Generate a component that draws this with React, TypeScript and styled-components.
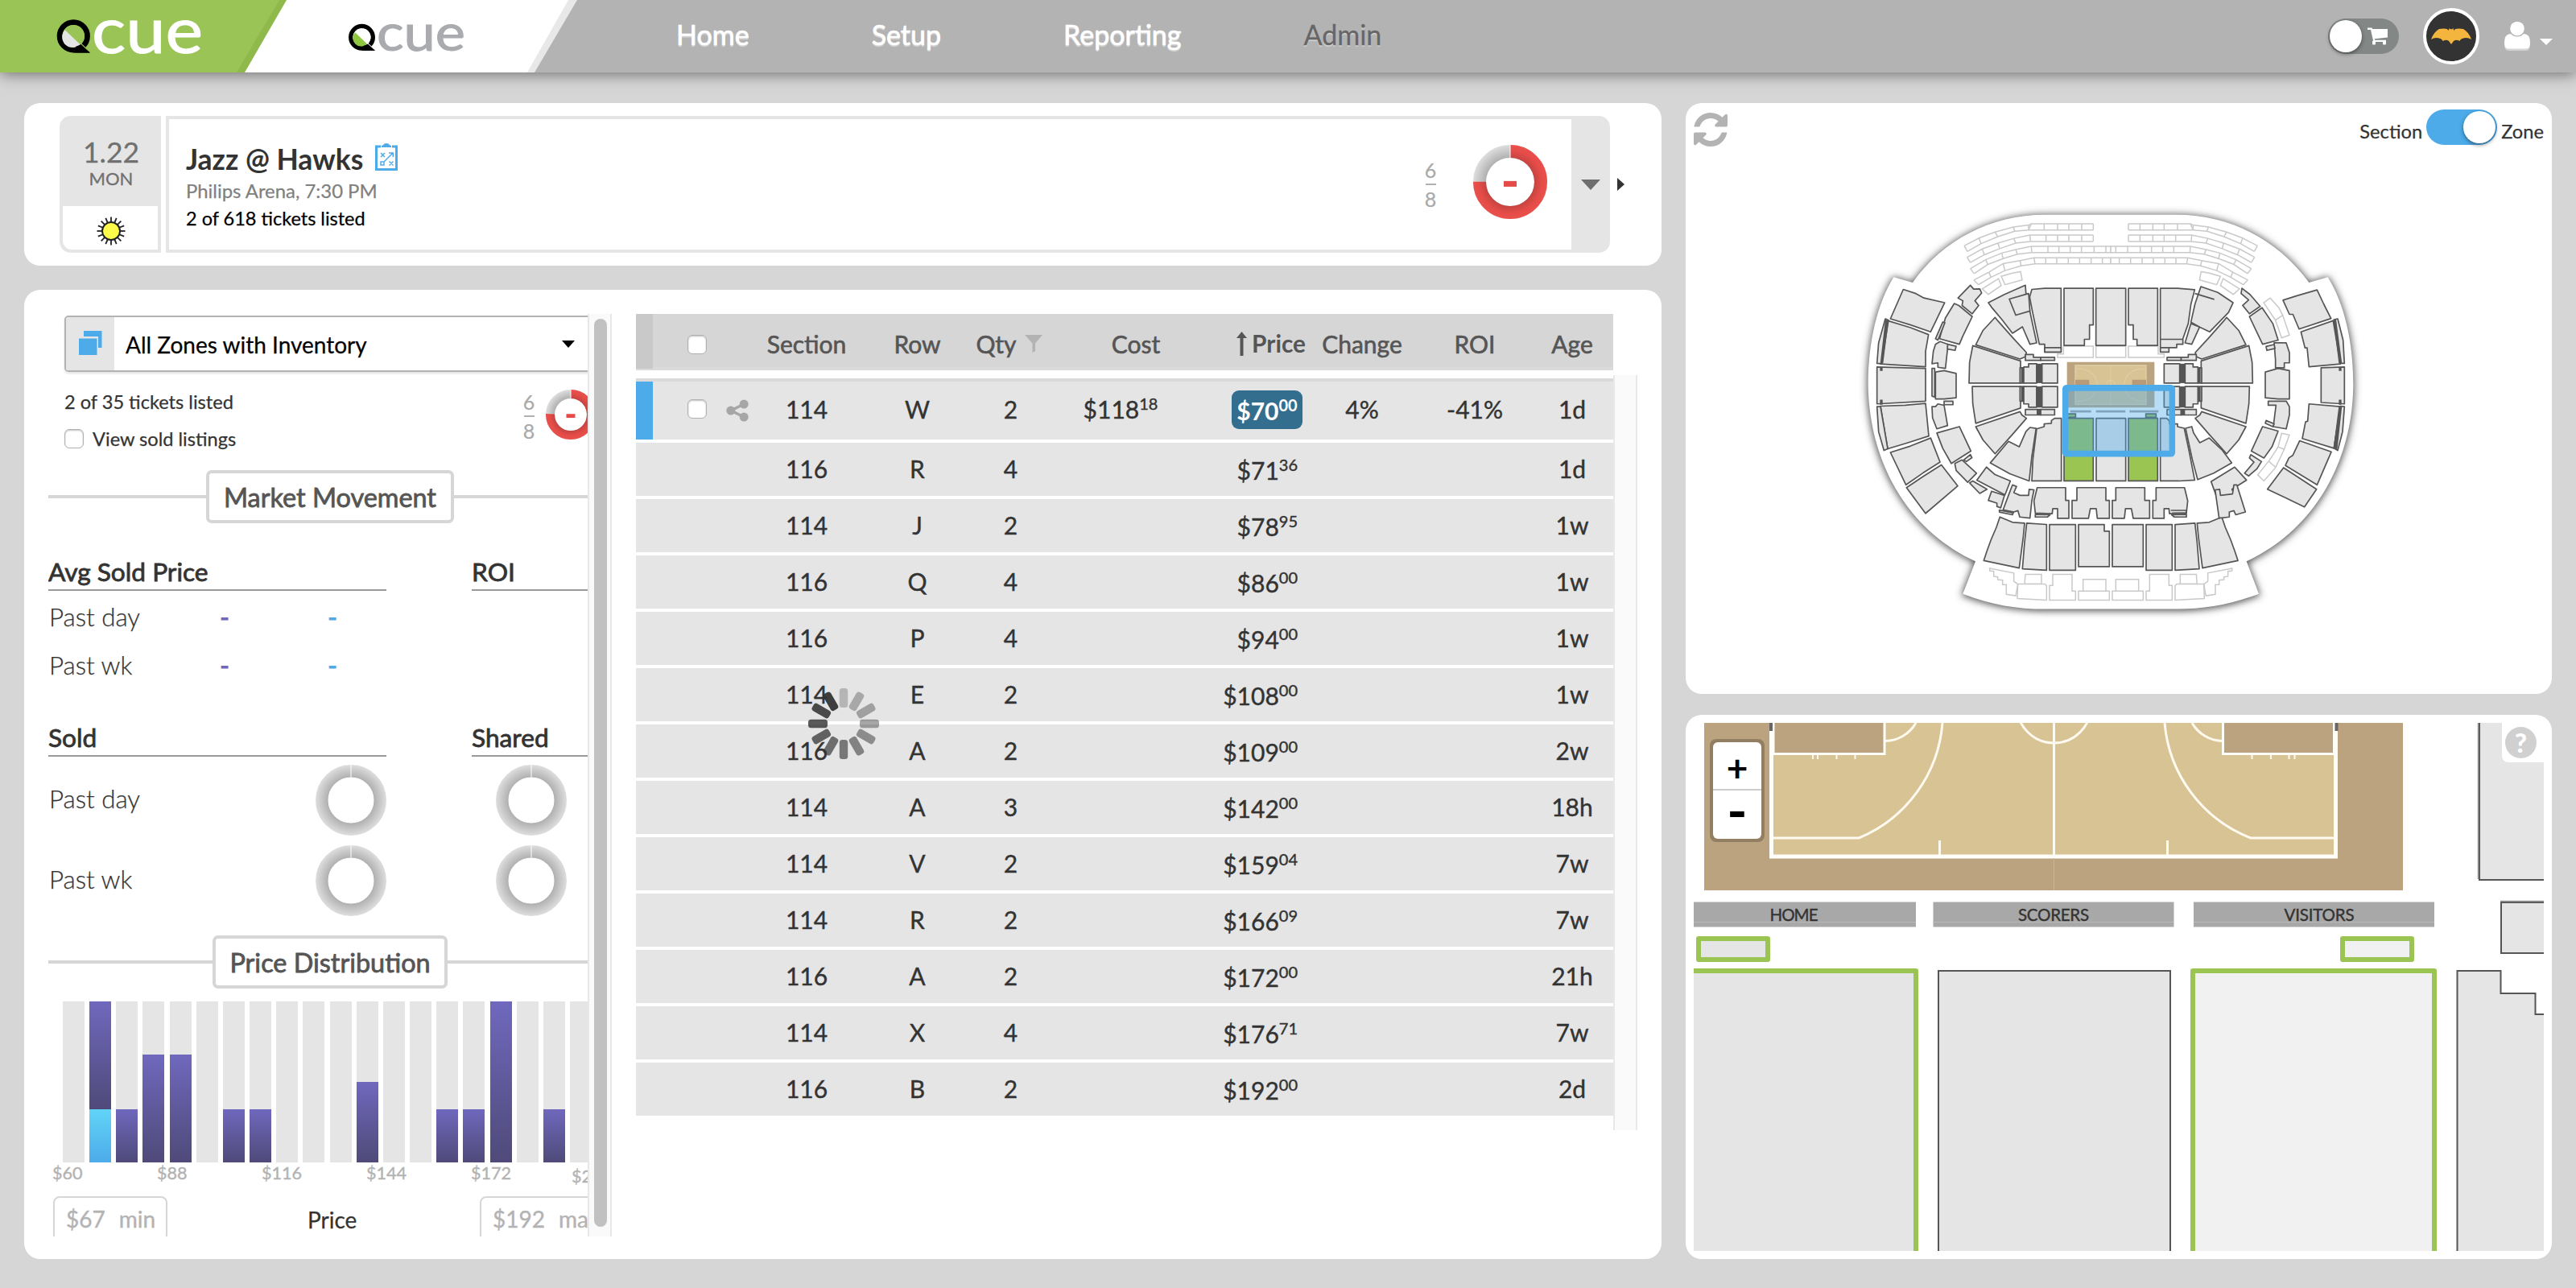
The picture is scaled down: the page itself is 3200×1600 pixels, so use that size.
import React from "react";
import styled, { createGlobalStyle, css } from "styled-components";

const blue = "#4dabe9";
const green = "#9bc552";

const GlobalStyle = createGlobalStyle`
  * { box-sizing: border-box; }
  body {
    margin: 0;
    background: #d6d6d6;
    font-family: Lato, "Open Sans", sans-serif;
    color: #333;
  }
  svg { display: block; flex: none; }
`;

/* ---------- page frame ---------- */

const Page = styled.div`
  width: 3200px;
  height: 1600px;
  overflow: hidden;
  background: #d6d6d6;
  display: flex;
  flex-direction: column;
`;

const TopBar = styled.header`
  height: 90px;
  flex: none;
  background: #b3b3b3;
  box-shadow: 0 2px 18px rgba(0, 0, 0, 0.5);
  display: flex;
  align-items: center;
  padding-right: 29px;
`;

const Nav = styled.nav`
  display: flex;
  gap: 152px;
  margin-left: 123px;
  flex: 1;
`;

const NavItem = styled.a<{ $muted?: boolean }>`
  font-size: 34px;
  line-height: 42px;
  margin-top: -5px;
  color: ${(p) => (p.$muted ? "#666" : "#fff")};
  -webkit-text-stroke: ${(p) => (p.$muted ? 0.3 : 0.7)}px currentColor;
  text-shadow: 0 2px 1px ${(p) => (p.$muted ? "rgba(255,255,255,.4)" : "rgba(255,255,255,.45)")};
`;

const Tools = styled.div`
  display: flex;
  align-items: center;
`;

const Spacer = styled.span<{ $w: number }>`
  width: ${(p) => p.$w}px;
  flex: none;
`;

const Switch = styled.div<{ $on?: boolean }>`
  width: 88px;
  height: 44px;
  border-radius: 22px;
  padding: 2px;
  display: flex;
  align-items: center;
  gap: 7px;
  justify-content: ${(p) => (p.$on ? "flex-end" : "flex-start")};
  background: ${(p) => (p.$on ? blue : "#838887")};
`;

const Knob = styled.span`
  width: 40px;
  height: 40px;
  border-radius: 50%;
  background: #fff;
  box-shadow: 0 2px 5px rgba(0, 0, 0, 0.45);
`;

const Avatar = styled.div`
  width: 70px;
  height: 70px;
  border-radius: 50%;
  border: 4px solid #fff;
  background: #333;
  display: flex;
  align-items: center;
  justify-content: center;
  margin: 0 31px 0 30px;
`;

const Columns = styled.main`
  flex: 1;
  display: grid;
  grid-template-columns: 2034px 1076px;
  gap: 30px;
  padding: 38px 30px 36px;
`;

const Column = styled.div<{ $gap: number }>`
  display: flex;
  flex-direction: column;
  gap: ${(p) => p.$gap}px;
`;

const Card = styled.section`
  background: #fff;
  border-radius: 20px;
  position: relative;
`;

/* ---------- event summary ---------- */

const EventCard = styled(Card)`
  height: 202px;
  padding: 16px 44px;
  display: flex;
  align-items: center;
`;

const DateTile = styled.div`
  width: 126px;
  height: 170px;
  background: #e5e5e5;
  border-radius: 14px 0 0 14px;
  padding: 0 4px 4px;
  display: flex;
  flex-direction: column;
  margin-right: 6px;
`;

const DateText = styled.div`
  height: 112px;
  padding: 24px 0 0 2px;
  display: flex;
  flex-direction: column;
  align-items: center;
  color: #707070;
`;

const Day = styled.span`
  font-size: 35.5px;
  line-height: 42px;
  -webkit-text-stroke: 0.3px currentColor;
`;

const Weekday = styled.span`
  font-size: 22px;
  line-height: 24px;
  -webkit-text-stroke: 0.3px currentColor;
`;

const Weather = styled.div`
  flex: 1;
  background: #fff;
  border-radius: 0 0 0 11px;
  display: flex;
  justify-content: center;
  padding: 13px 0 0 2px;
`;

const EventBox = styled.div`
  flex: 1;
  height: 170px;
  border: 4px solid #e5e5e5;
  border-right: 0;
  border-radius: 0 14px 14px 0;
  display: flex;
  align-items: center;
`;

const EventInfo = styled.div`
  flex: 1;
  padding: 6px 0 0 21px;
`;

const EventTitle = styled.h1`
  margin: 0;
  font-size: 35.5px;
  line-height: 44px;
  font-weight: 700;
  display: flex;
  align-items: flex-start;
  gap: 15px;
`;

const EventLine = styled.div<{ $dim?: boolean }>`
  font-size: ${(p) => (p.$dim ? 23.9 : 23.5)}px;
  line-height: 34px;
  color: ${(p) => (p.$dim ? "#808080" : "#000")};
  -webkit-text-stroke: 0.25px currentColor;
`;

const Score = styled.div`
  display: flex;
  flex-direction: column;
  align-items: center;
  gap: 4px;
  width: 14px;
  font-size: 25px;
  line-height: 26px;
  color: #aaa;
  -webkit-text-stroke: 0.25px currentColor;
`;

const ScoreRule = styled.span`
  width: 13px;
  height: 2px;
  background: #b0b0b0;
`;

const EventDonut = styled.div`
  margin: 0 0 6px 46px;
`;

const Expander = styled.div`
  width: 48px;
  align-self: stretch;
  margin-left: 30px;
  background: #e5e5e5;
  display: flex;
  align-items: center;
  justify-content: center;
  border-radius: 0 10px 10px 0;
`;

const Triangle = styled.span<{ $dir: "down" | "right"; $w: number; $h: number; $color: string }>`
  display: block;
  width: 0;
  height: 0;
  flex: none;
  ${(p) =>
    p.$dir === "down"
      ? css`
          border-left: ${p.$w / 2}px solid transparent;
          border-right: ${p.$w / 2}px solid transparent;
          border-top: ${p.$h}px solid ${p.$color};
        `
      : css`
          border-top: ${p.$h / 2}px solid transparent;
          border-bottom: ${p.$h / 2}px solid transparent;
          border-left: ${p.$w}px solid ${p.$color};
        `}
`;

const NextArrow = styled.div`
  margin: 0 2px 0 9px;
`;

/* ---------- market pane ---------- */

const WorkCard = styled(Card)`
  flex: 1;
  padding: 30px 30px 28px;
  display: flex;
  align-items: flex-start;
`;

const Pane = styled.div`
  width: 700px;
  height: 1146px;
  margin-right: 30px;
  display: flex;
`;

const PaneView = styled.div`
  width: 670px;
  height: 100%;
  overflow: hidden;
`;

const PaneContent = styled.div`
  width: 700px;
`;

const PaneTrack = styled.div`
  width: 30px;
  height: 100%;
  background: #fafafa;
  border: solid #e8e8e8;
  border-width: 0 2px;
  padding: 6px 0 12px 6px;
`;

const PaneThumb = styled.div`
  width: 16px;
  height: 100%;
  border-radius: 8px;
  background: #c1c1c1;
`;

const ZonePicker = styled.div`
  margin: 2px 20px 0;
  height: 70px;
  border: 2px solid #b3b3b3;
  border-radius: 5px;
  box-shadow: 0 2px 3px rgba(0, 0, 0, 0.12);
  display: flex;
  align-items: center;
  overflow: hidden;
  padding-right: 24px;
`;

const ZoneIcon = styled.div`
  width: 60px;
  align-self: stretch;
  background: #e5e5e5;
  display: flex;
  align-items: center;
  justify-content: center;
  padding: 0 3px 3px 0;
`;

const ZoneName = styled.span`
  flex: 1;
  margin-left: 14px;
  padding-top: 2px;
  font-size: 28px;
  line-height: 36px;
  color: #000;
  -webkit-text-stroke: 0.25px currentColor;
`;

const PaneSummary = styled.div`
  display: flex;
  align-items: center;
  height: 92px;
  margin: 14px 0 16px 20px;
`;

const SummaryLines = styled.div`
  width: 570px;
  font-size: 23.6px;
  line-height: 46px;
  -webkit-text-stroke: 0.25px currentColor;
`;

const SummaryLine = styled.div`
  display: flex;
  align-items: center;
  gap: 11px;
`;

const Check = styled.span`
  width: 24px;
  height: 24px;
  flex: none;
  border-radius: 6px;
  background: #fff;
  border: 1.5px solid #b0b0b0;
  box-shadow: inset 0 1px 2px rgba(0, 0, 0, 0.25);
`;

const PaneScore = styled.div`
  padding-bottom: 11px;
`;

const PaneDonut = styled.div`
  margin-left: 14px;
  padding-bottom: 14px;
`;

const GroupTitle = styled.div<{ $top?: number }>`
  display: flex;
  align-items: center;
  height: 66px;
  margin-top: ${(p) => p.$top || 0}px;
  &::before,
  &::after {
    content: "";
    flex: 1;
    height: 4px;
    background: #d6d6d6;
  }
`;

const GroupLabel = styled.h2<{ $width: number }>`
  margin: 0;
  width: ${(p) => p.$width}px;
  height: 66px;
  line-height: 60px;
  border: 4px solid #d6d6d6;
  border-radius: 7px;
  text-align: center;
  font-size: 32.4px;
  font-weight: 400;
  color: #555;
  -webkit-text-stroke: 0.8px currentColor;
`;

const StatGrid = styled.div<{ $top: number }>`
  display: grid;
  grid-template-columns: 420px 174px;
  column-gap: 106px;
  margin-top: ${(p) => p.$top}px;
`;

const StatHead = styled.h3<{ $gap?: number }>`
  margin: 0 0 ${(p) => p.$gap || 2}px;
  height: 46px;
  line-height: 44px;
  font-size: 31.7px;
  font-weight: 400;
  border-bottom: 2px solid #999;
  -webkit-text-stroke: 0.8px currentColor;
`;

const StatRow = styled.div<{ $height: number }>`
  height: ${(p) => p.$height}px;
  display: grid;
  grid-template-columns: 152px 134px 134px;
  align-items: center;
`;

const StatName = styled.span<{ $lift?: boolean }>`
  font-size: 31.3px;
  line-height: 40px;
  font-weight: 300;
  padding-left: 1px;
  padding-bottom: ${(p) => (p.$lift ? 4 : 0)}px;
  white-space: nowrap;
  -webkit-text-stroke: 0.25px currentColor;
`;

const Dash = styled.span<{ $color: string }>`
  text-align: center;
  font-size: 31px;
  line-height: 40px;
  color: ${(p) => p.$color};
  -webkit-text-stroke: 1.2px currentColor;
`;

const RingCell = styled.div<{ $indent?: boolean }>`
  grid-column: 3;
  display: flex;
  justify-content: flex-end;
  ${(p) =>
    p.$indent &&
    css`
      height: 100px;
      align-items: center;
      justify-content: flex-start;
      padding-left: 30px;
    `}
`;

const Histogram = styled.div`
  display: flex;
  gap: 6.16px;
  height: 200px;
  margin: 16px 0 0 18px;
`;

const Slot = styled.div`
  width: 27px;
  flex: none;
  background: #e5e5e5;
  display: flex;
  flex-direction: column;
  justify-content: flex-end;
`;

const Bar = styled.span<{ $own?: boolean }>`
  display: block;
  background: ${(p) =>
    p.$own ? "linear-gradient(#61d4f7, #4dabe9)" : "linear-gradient(#7068bd, #4f4a79)"};
`;

const Axis = styled.div`
  display: flex;
  margin-left: 5px;
  font-size: 21.6px;
  line-height: 27px;
  color: #b3b3b3;
  -webkit-text-stroke: 0.4px currentColor;
`;

const Tick = styled.span<{ $last?: boolean }>`
  width: 130px;
  flex: none;
  padding-top: ${(p) => (p.$last ? 4 : 0)}px;
  margin-left: ${(p) => (p.$last ? -5 : 0)}px;
`;

const Range = styled.div`
  display: flex;
  margin: 11px 0 0 6px;
  height: 56px;
  font-size: 28px;
  line-height: 53px;
`;

const RangeBox = styled.div`
  flex: none;
  display: flex;
  gap: 17px;
  width: 142px;
  padding-left: 14px;
  border: 2px solid #d6d6d6;
  border-radius: 8px;
  color: #b3b3b3;
  -webkit-text-stroke: 0.4px currentColor;
`;

const RangeName = styled.span`
  width: 388px;
  padding-left: 174px;
  padding-top: 3px;
  -webkit-text-stroke: 0.25px currentColor;
`;

/* ---------- listing table ---------- */

const Table = styled.div`
  width: 1244px;
  position: relative;
`;

const grid = css`
  display: grid;
  grid-template-columns: 21px 121px 140px 135px 97px 176px 132px 160px 120px 112px;
  align-items: center;
  text-align: center;
  width: 1214px;
`;

const TableHead = styled.div`
  ${grid}
  height: 70px;
  background: #d6d6d6;
  font-size: 30px;
  line-height: 36px;
  color: #555;
  box-shadow: inset 0 -4px #dadada;
  -webkit-text-stroke: 0.6px currentColor;
  margin-bottom: 10px;
`;

const HeadCell = styled.span`
  padding-top: 3px;
`;

const TableBody = styled.div`
  display: flex;
`;

const Rows = styled.div`
  display: flex;
  flex-direction: column;
  gap: 4px;
`;

const Row = styled.div<{ $own?: boolean }>`
  ${grid}
  height: ${(p) => (p.$own ? 76 : 66)}px;
  padding-bottom: ${(p) => (p.$own ? 0 : 2)}px;
  background: #e5e5e5;
  font-size: 30px;
  line-height: 36px;
  -webkit-text-stroke: 0.4px currentColor;
  ${(p) => p.$own && "box-shadow: inset 0 4px #dadada;"}
`;

const Flag = styled.span<{ $color: string; $top?: number; $bottom?: number }>`
  align-self: stretch;
  margin: ${(p) => p.$top || 0}px 0 ${(p) => p.$bottom || 0}px;
  background: ${(p) => p.$color};
`;

const Actions = styled.span<{ $drop?: number }>`
  display: flex;
  align-items: center;
  gap: 24px;
  padding-left: 43px;
  padding-top: ${(p) => p.$drop || 0}px;
`;

const RowCheck = styled(Check)<{ $lift?: boolean }>`
  margin-bottom: ${(p) => (p.$lift ? 3 : 0)}px;
`;

const QtyHead = styled(HeadCell)`
  display: flex;
  align-items: center;
  justify-content: center;
  gap: 10px;
  padding-right: 4px;
`;

const CostHead = styled(HeadCell)`
  padding-left: 38px;
`;

const PriceHead = styled(HeadCell)`
  display: flex;
  align-items: center;
  justify-content: flex-end;
  gap: 6px;
  margin-right: -10px;
  font-weight: 700;
  font-size: 29.8px;
  -webkit-text-stroke: 0;
`;

const AgeCell = styled.span<{ $head?: boolean }>`
  padding-left: 10px;
  padding-top: ${(p) => (p.$head ? 3 : 0)}px;
`;

const PriceCell = styled.span`
  display: flex;
  justify-content: flex-end;
  padding-top: 3px;
`;

const Money = styled.span<{ $badge?: boolean }>`
  display: inline-flex;
  align-items: flex-start;
  justify-content: center;
  ${(p) =>
    p.$badge &&
    css`
      height: 48px;
      width: 88px;
      padding-top: 7px;
      border-radius: 9px;
      background: #336e8e;
      color: #fff;
      font-weight: 700;
      margin-right: -6px;
      margin-bottom: 2px;
      -webkit-text-stroke: 0;
    `}
`;

const Cents = styled.span`
  font-size: 20px;
  line-height: 23px;
`;

const TableTrack = styled.div`
  width: 30px;
  height: 938px;
  margin-top: -4px;
  background: #fafafa;
  border: solid #e8e8e8;
  border-width: 0 2px;
`;

const Loading = styled.div`
  position: absolute;
  left: 212px;
  top: 463px;
`;

/* ---------- seat maps ---------- */

const OverviewCard = styled(Card)`
  height: 734px;
`;

const MapTools = styled.div`
  height: 112px;
  padding: 8px 10px 0;
  display: flex;
  align-items: flex-start;
  justify-content: space-between;
`;

const RefreshIcon = styled.svg`
  margin-top: 4px;
  width: 42px;
  height: 42px;
`;

const ModePicker = styled.div`
  display: flex;
  align-items: center;
  font-size: 23.7px;
  line-height: 30px;
  gap: 5px;
  -webkit-text-stroke: 0.25px currentColor;
`;

const ModeName = styled.span`
  padding-top: 9px;
`;

const Overview = styled.svg`
  margin-left: 206px;
  width: 640px;
  height: 540px;
  overflow: visible;
`;

const DetailCard = styled(Card)`
  flex: 1;
  padding: 10px;
  margin-top: -4px;
`;

const ZoomControl = styled.div`
  position: absolute;
  left: 30px;
  top: 30px;
  width: 68px;
  height: 128px;
  padding: 4px;
  border-radius: 8px;
  background: rgba(0, 0, 0, 0.22);
  display: flex;
  flex-direction: column;
`;

const ZoomButton = styled.span<{ $size: number; $line: number }>`
  height: 60px;
  flex: none;
  background: #fff;
  color: #000;
  font-size: ${(p) => p.$size}px;
  font-weight: 700;
  line-height: ${(p) => p.$line}px;
  text-align: center;
  &:first-child {
    border-radius: 6px 6px 0 0;
    border-bottom: 2px solid #ccc;
  }
  &:last-child {
    border-radius: 0 0 6px 6px;
  }
`;

const HelpCorner = styled.div`
  position: absolute;
  right: 10px;
  top: 10px;
  width: 52px;
  height: 49px;
  background: #fff;
  border-radius: 0 0 0 8px;
  padding: 5px 0 0 4px;
`;

const Help = styled.div`
  width: 39px;
  height: 39px;
  border-radius: 50%;
  background: #d0d0d0;
  color: #fff;
  font-weight: 900;
  font-size: 33px;
  line-height: 39px;
  text-align: center;
`;

/* ---------- drawings ---------- */

function Emblem({ cx, cy, k, leaf, halo }: { cx: number; cy: number; k: number; leaf: string; halo: string }) {
  return (
    <g transform={`translate(${cx} ${cy}) scale(${k})`}>
      <circle r="17.2" fill="none" stroke="#000" strokeWidth="6.8" />
      <path d="M-2 14 L3 20.7 H20.5 L4 3 Z" fill="#000" />
      <circle r="13.7" fill={halo} />
      <path d="M-10.5 -7.5 A 11.5 11.5 0 0 0 8 10.2 Z" fill={leaf} />
      <path d="M8.5 8.8 L19 19" stroke={halo} strokeWidth="1.6" />
      <path d="M3 13 L9.5 10.5 L20.5 20.7 H0 Z" fill="#000" />
    </g>
  );
}

const BrandArt = styled.svg`
  overflow: visible;
`;

function Brand() {
  return (
    <BrandArt width="717" height="90" viewBox="0 0 717 90">
      <path d="M0 0H717L664 90H0Z" fill="#e8e8e8" />
      <path d="M0 0H706L655 90H0Z" fill="#fff" />
      <path d="M0 0H356L304 90H0Z" fill="#8fb94b" />
      <path d="M0 0H347L294 90H0Z" fill="#9ac456" />
      <Emblem cx={91.3} cy={44.8} k={1} leaf="#e5e5e5" halo="#9ac456" />
      <text x="114" y="65.500" fontSize="79" fill="#fff" stroke="#fff" strokeWidth="1" textLength="138" lengthAdjust="spacingAndGlyphs">cue</text>
      <Emblem cx={449.5} cy={46.3} k={0.8} leaf="#8fc63f" halo="#fff" />
      <text x="468" y="62.500" fontSize="62.500" fill="#a9abae" stroke="#a9abae" strokeWidth="1" textLength="110" lengthAdjust="spacingAndGlyphs">cue</text>
    </BrandArt>
  );
}

function Donut({ R, r, share, mark }: { R: number; r: number; share?: number; mark?: number }) {
  const id = `ring${R}`;
  const mid = (R + r) / 2;
  const len = 2 * Math.PI * mid;
  return (
    <svg width={R * 2} height={R * 2} viewBox={`${-R} ${-R} ${R * 2} ${R * 2}`}>
      <defs>
        <radialGradient id={`${id}g`} gradientUnits="userSpaceOnUse" cx="0" cy="0" r={R}>
          <stop offset={r / R} stopColor="#b0b0b0" />
          <stop offset="1" stopColor="#dedede" />
        </radialGradient>
        <radialGradient id={`${id}r`} gradientUnits="userSpaceOnUse" cx="0" cy="0" r={R}>
          <stop offset={r / R} stopColor="#c54440" />
          <stop offset=".85" stopColor="#e54c48" />
          <stop offset="1" stopColor="#ea504c" />
        </radialGradient>
      </defs>
      <circle r={mid} fill="none" stroke={`url(#${id}g)`} strokeWidth={R - r} />
      {share && (
        <circle
          r={mid}
          fill="none"
          stroke={`url(#${id}r)`}
          strokeWidth={R - r}
          strokeDasharray={`${len * share} ${len}`}
          transform="rotate(-90)"
        />
      )}
      <path d={`M0 ${-R}V${-r}`} stroke="#fff" strokeWidth="1" />
      {mark && <rect x={-mark / 2} y={-mark * 0.07} width={mark} height={mark * 0.44} fill="#e54c48" />}
    </svg>
  );
}

function Sun() {
  const rays = Array.from({ length: 16 }, (_, i) => i * 22.5);
  return (
    <svg width="36" height="36" viewBox="-18 -18 36 36">
      {rays.map((a) => (
        <path key={a} d="M0 -11V-17.5" stroke="#222" strokeWidth="1.8" transform={`rotate(${a})`} />
      ))}
      <circle r="11" fill="#fffb4a" stroke="#222" strokeWidth="2" />
    </svg>
  );
}

const PlaybookArt = styled.svg`
  margin-top: 2px;
`;

function Playbook() {
  return (
    <PlaybookArt width="28" height="34" viewBox="0 0 28 34" fill="none" stroke={blue}>
      <path d="M7 4H1.500V32.500H26.500V4H21" strokeWidth="3" />
      <path d="M8 5V3.500Q8 2.500 10 2.200Q11 0 14 0Q17 0 18 2.200Q20 2.500 20 3.500V5Z" fill={blue} stroke="none" />
      <path d="M7 12L12 17M12 12L7 17M17.500 22.500L22.500 27.500M22.500 22.500L17.500 27.500M7 23H11V27H7ZM11 23L22 12M17 12H22.300V17" strokeWidth="1.5" />
    </PlaybookArt>
  );
}

function Cart() {
  return (
    <svg width="26" height="22" viewBox="0 0 26 22" fill="#fff">
      <path d="M0 .500H5.500L6.200 2H25V12.500L8.800 14.200L9.200 15.800H23V18H7.500L6.600 14.500L4 3H0Z" />
      <rect x="6" y="16.500" width="4" height="5" rx="1" />
      <rect x="19" y="16.500" width="4" height="5" rx="1" />
    </svg>
  );
}

function Bat() {
  return (
    <svg width="50" height="20" viewBox="0 0 50 20">
      <path
        d="M10 1Q16 0 20 1Q21 3 22 2.500L22.500 0L24 1.200H26L27.500 0L28 2.500Q29 3 30 1Q34 0 40 1Q47 5 50 14Q45 10.500 38.500 13Q36 14 35.500 16Q31 13.500 28 16L25 20L22 16Q19 13.500 14.500 16Q14 14 11.500 13Q5 10.500 0 14Q3 5 10 1Z"
        fill="#f4b53f"
      />
    </svg>
  );
}

function Person() {
  return (
    <svg width="32" height="38" viewBox="0 0 32 38">
      <path d="M8 18Q0 18 0 29Q0 37 5 37H27Q32 37 32 29Q32 18 24 18Q21 20.500 16 20.500Q11 20.500 8 18Z" fill="#d4d4d4" />
      <circle cx="16" cy="9.500" r="8.800" fill="#fff" />
      <path d="M8 16Q0 16 0 27Q0 34.500 5 34.500H27Q32 34.500 32 27Q32 16 24 16Q21 19.500 16 19.500Q11 19.500 8 16Z" fill="#fff" />
    </svg>
  );
}

function Layers() {
  return (
    <svg width="32" height="32" viewBox="0 0 32 32">
      <rect x="9" y="1" width="22.500" height="21" fill={blue} />
      <rect x="1" y="8" width="26" height="24" fill="#e5e5e5" />
      <rect x="3" y="10.500" width="22.500" height="20.500" fill={blue} />
    </svg>
  );
}

function Share() {
  return (
    <svg width="28" height="28" viewBox="0 0 28 28" fill="#a6a6a6" stroke="#a6a6a6">
      <path d="M22 6L6 14L22 22" fill="none" strokeWidth="3.500" />
      <circle cx="5.800" cy="14" r="5.500" stroke="none" />
      <circle cx="22.200" cy="6" r="5.500" stroke="none" />
      <circle cx="22.200" cy="22" r="5.500" stroke="none" />
    </svg>
  );
}

function Spinner() {
  const tones = [0.27, 0.34, 0.39, 0.43, 0.5, 0.56, 0.62, 0.68, 0.74, 0.81, 0.87, 0.94];
  return (
    <svg width="92" height="92" viewBox="-46 -46 92 92">
      {tones.map((o, i) => (
        <rect key={i} x="-5.200" y="-44" width="10.400" height="24" rx="3.500" fill="#333" opacity={o} transform={`rotate(${i * 30})`} />
      ))}
    </svg>
  );
}

type Pt = [number, number];

const pts = (list: string) => <polygon key={list} points={list} />;

function Band({ top, bottom }: { top: Pt[]; bottom: Pt[] }) {
  const outline = [...top, ...[...bottom].reverse()].map((p) => p.join(",")).join(" ");
  return (
    <>
      <polygon points={outline} stroke="none" />
      <polyline points={top.map((p) => p.join(",")).join(" ")} fill="none" />
      <polyline points={bottom.map((p) => p.join(",")).join(" ")} fill="none" />
      {top.map((t, i) =>
        t[0] === 965 ? null : <path key={i} d={`M${t[0]} ${t[1]}L${bottom[i][0]} ${bottom[i][1]}`} />
      )}
    </>
  );
}

const straight = (y: number, xs: number[]): Pt[] => xs.map((x) => [x, y] as Pt);

const suiteRows: { top: Pt[]; bottom: Pt[] }[] = [
  {
    top: [[420, 190], [475, 162], [535, 140], [603, 122], [660, 115], ...straight(110, [670, 718, 768, 810, 858, 901])],
    bottom: [[432, 210], [483, 182], [545, 157], [608, 137], [660, 133], ...straight(133, [660, 718, 768, 810, 858, 901])],
  },
  {
    top: [[431, 231], [487, 201], [546, 180], [605, 163], ...straight(151, [665, 725, 768, 810, 858, 901])],
    bottom: [[443, 250], [495, 222], [552, 200], [612, 180], ...straight(174, [667, 725, 768, 810, 858, 901])],
  },
  {
    top: [[443, 272], [500, 240], [560, 216], [612, 203], ...straight(192, [670, 732, 773, 815, 857, 904, 948, 967])],
    bottom: [[457, 290], [508, 257], [565, 236], [618, 220], ...straight(214, [672, 732, 773, 815, 857, 904, 948, 967])],
  },
  {
    top: [[456, 313], [512, 285], [565, 254], [628, 243], ...straight(233, [680, 724, 765, 808, 850, 893, 935, 967])],
    bottom: [[473, 330], [520, 303], [572, 279], [632, 262], ...straight(255, [684, 724, 765, 808, 850, 893, 935, 967])],
  },
];

const outlineHalf = [
  "487,345 548,308 558,333 510,365",
  "558,300 600,288 630,283 636,313 572,330",
  "790,552 901,552 901,592 768,592 768,580 790,580",
  "515,1353 605,1370 605,1400 620,1410 612,1452 577,1447 577,1412 563,1412 563,1396 545,1394 545,1384 530,1382 530,1364 515,1362",
  "648,1375 708,1375 708,1410 645,1410",
  "620,1410 721,1410 727,1416 727,1468 618,1462",
  "750,1375 822,1375 822,1435 835,1435 835,1468 738,1468 738,1415 750,1415",
  "846,1435 961,1435 961,1468 846,1468",
  "863,1393 948,1393 948,1435 863,1435",
];

const seatHalf = [
  "672,347 720,343 781,343 781,573 720,573 720,545 700,545 688,490 675,430 664,375",
  "792,343 901,343 901,475 887,475 887,527 868,527 868,549 792,549",
  "720,557 781,557 781,573 720,573",
  "535,448 545,460 600,520 652,575 647,590 628,598 463,547 490,495",
  "452,550 630,605 630,685 438,685 440,610",
  "450,697 630,697 630,775 463,830 452,760",
  "463,842 628,788 635,800 652,812 600,870 535,940 490,890",
  "628,630 642,630 642,685 628,685",
  "642,627 660,627 660,615 690,615 690,685 642,685",
  "710,615 768,615 768,685 710,685",
  "628,697 642,697 642,750 628,750",
  "642,697 690,697 690,772 660,772 660,760 642,760",
  "710,697 768,697 768,772 710,772",
  "648,582 678,582 678,592 705,592 705,603 648,603",
  "705,592 757,592 757,603 705,603",
  "648,780 705,780 705,800 648,800",
  "705,780 757,780 757,800 705,800",
  "692,1062 798,1062 798,1108 810,1108 810,1173 768,1173 768,1138 750,1138 748,1156 685,1154 680,1110",
  "685,1158 740,1160 730,1168 685,1168",
  "840,1062 948,1062 948,1108 961,1108 961,1173 916,1173 912,1138 890,1138 883,1173 822,1173 822,1108 840,1108",
  "553,1168 600,1187 645,1190 640,1240 632,1300 625,1352 493,1325 505,1290 520,1250 540,1205",
  "653,1190 727,1195 727,1360 637,1355 645,1260",
  "738,1195 835,1195 835,1360 738,1360",
];

const seatLeft = [
  "193,347 240,362 270,378 347,395 295,500 220,475 145,453",
  "135,460 220,485 287,510 276,570 276,626 108,616",
  "126,453 138,458 112,615 95,614 101,540",
  "95,627 276,632 276,750 95,760",
  "108,768 200,765 276,758 288,876 210,900 135,922",
  "95,770 108,770 135,922 121,928 101,860",
  "145,935 220,912 295,883 330,970 265,1010 203,1052",
  "205,1062 270,1020 335,980 396,1056 276,1155",
  "443,332 455,346 478,345 485,360 460,388 474,405 450,435 412,405 415,388 397,378",
  "383,398 400,405 450,445 415,515 402,545 328,525 350,450",
  "340,465 348,467 322,530 313,525",
  "313,545 330,535 360,545 350,632 322,628 322,612 300,615 305,570",
  "358,545 390,552 386,567 358,562",
  "313,645 345,640 390,650 390,738 345,742 313,742",
  "300,632 310,632 310,735 300,732",
  "322,760 345,765 358,838 318,850 302,810 300,770 313,770",
  "345,750 378,750 378,763 345,763",
  "318,865 402,842 445,930 372,975 340,920",
  "385,975 412,962 466,1010 433,1043 390,1000",
  "418,962 443,943 449,954 428,968",
  "503,988 535,1015 592,1038 572,1088 467,1035",
  "440,1045 452,1038 505,1068 478,1083",
  "522,1075 570,1090 556,1135 542,1130 542,1118 510,1108",
  "510,395 570,365 648,332 650,360 690,540 665,545 637,482 600,505 560,455 525,415",
  "588,382 660,362 665,425 612,440",
  "585,895 625,915 650,860 665,845 688,848 672,950 662,1038 590,1012 517,973",
  "600,1052 615,1058 605,1080 628,1090 660,1090 662,1068 680,1070 672,1110 665,1172 627,1168 620,1145 605,1150 565,1142 585,1090",
  "551,1143 603,1153 600,1160 551,1150",
  "690,850 718,842 718,832 745,830 745,820 757,812 782,812 782,1038 672,1038 676,960",
];

const seatRight = [
  "1608,386 1660,370 1735,349 1760,400 1787,452 1668,490 1645,437 1632,437",
  "1675,500 1795,460 1822,616 1705,626 1698,558 1690,558",
  "1798,456 1812,453 1832,530 1837,614 1822,614",
  "1750,630 1837,627 1837,760 1750,755",
  "1705,760 1822,770 1798,920 1680,885 1692,825 1700,822",
  "1822,768 1837,770 1830,860 1812,928 1798,920",
  "1670,893 1788,933 1735,1052 1617,982 1630,955 1645,945",
  "1610,990 1733,1068 1688,1132 1620,1100 1550,1068",
  "1455,343 1485,365 1523,408 1483,435 1458,405 1480,385 1452,362",
  "1530,413 1570,470 1590,530 1532,545 1483,445",
  "1575,540 1620,540 1632,575 1632,612 1613,612 1613,630 1580,630 1580,600",
  "1545,553 1575,546 1578,560 1548,567",
  "1542,645 1590,632 1632,640 1632,742 1590,742 1542,738",
  "1553,750 1620,750 1632,770 1632,800 1620,850 1572,842 1582,765 1553,765",
  "1545,820 1575,832 1570,842 1542,830",
  "1532,842 1590,858 1567,915 1537,955 1490,930",
  "1488,943 1528,968 1510,995 1480,1020 1465,1010 1500,970 1483,955",
  "1428,988 1472,1035 1418,1068 1437,1108 1372,1125 1340,1040",
  "1302,337 1365,358 1422,395 1405,430 1335,500 1297,483 1265,465 1280,400",
  "1265,470 1297,483 1268,545 1243,540",
  "1151,343 1215,343 1279,348 1265,400 1255,470 1235,525 1235,545 1212,545 1212,557 1183,557 1183,573 1151,573",
  "1151,812 1175,812 1185,822 1185,832 1215,832 1215,842 1240,848 1258,930 1279,1035 1220,1038 1151,1038",
  "1245,848 1268,842 1275,865 1298,900 1333,883 1380,925 1417,973 1350,1010 1290,1033 1270,960",
  "1355,1070 1372,1068 1375,1090 1420,1085 1425,1052 1436,1052 1468,1150 1432,1160 1425,1145 1408,1150 1408,1168 1370,1172",
  "846,1195 942,1195 942,1219 961,1219 961,1347 846,1347",
  "972,1195 1087,1195 1087,1347 972,1347",
];

const mirror = "translate(1933 0) scale(-1 1)";

function ArenaOverview() {
  const edge =
    "M720 78H1213C1413 78 1590 170 1705 322L1775 303C1838 400 1870 540 1870 690C1868 960 1733 1210 1472 1328L1518 1445C1413 1485 1313 1500 1213 1500H720C620 1500 520 1485 415 1445L462 1328C200 1210 65 960 62 690C62 540 95 400 157 303L228 322C340 170 520 78 720 78Z";
  return (
    <Overview viewBox="0 0 1920 1568" preserveAspectRatio="none">
      <defs>
        <filter id="soft" x="-10%" y="-10%" width="120%" height="120%">
          <feGaussianBlur stdDeviation="14" />
        </filter>
      </defs>
      <style>{".map * { vector-effect: non-scaling-stroke; }"}</style>
      <path d={edge} fill="#555" stroke="#555" strokeWidth="8" filter="url(#soft)" transform="translate(0 3)" />
      <path d={edge} fill="#fff" />
      <g className="map" fill="#fff" stroke="#c9c9c9" strokeWidth="1.500">
        {[undefined, mirror].map((t, i) => (
          <g key={i} transform={t}>
            {suiteRows.map((row, k) => (
              <Band key={k} {...row} />
            ))}
            {outlineHalf.map(pts)}
          </g>
        ))}
        <rect x="911" y="552" width="111" height="40" />
        {pts("1536,395 1560,378 1592,412 1607,440 1632,512 1603,522 1580,458")}
        {pts("1603,866 1632,872 1610,930 1580,990 1537,1038 1514,1016 1560,960 1590,915")}
        <path d="M1580 458L1607 440M1590 915L1614 925M1556 968L1580 988" />
      </g>
      <g className="map" fill="#e5e5e5" stroke="#555" strokeWidth="1.700" strokeLinejoin="round">
        {seatHalf.map(pts)}
        <g transform={mirror}>{seatHalf.slice(3).map(pts)}</g>
        {pts("1032,343 1141,343 1141,549 1064,549 1064,527 1050,527 1050,475 1032,475")}
        <rect x="911" y="343" width="111" height="206" />
        {seatLeft.map(pts)}
        {seatRight.map(pts)}
        <rect x="912" y="812" width="110" height="226" />
        <path d="M1280 362L1352 383M1183 557H1151M1151 527H1235M1190 1144H1248V1154H1195" fill="none" />
      </g>
      <g fill="#555">
        <rect x="688" y="615" width="22" height="70" />
        <rect x="688" y="697" width="22" height="76" />
        <rect x="632" y="630" width="10" height="55" />
        <rect x="632" y="697" width="10" height="54" />
        <rect x="690" y="780" width="16" height="20" />
        <g transform={mirror}>
          <rect x="688" y="615" width="22" height="70" />
          <rect x="688" y="697" width="22" height="76" />
          <rect x="632" y="630" width="10" height="55" />
          <rect x="632" y="697" width="10" height="54" />
          <rect x="690" y="780" width="16" height="20" />
        </g>
        <path d="M126 455L138 460L118 614H107ZM106 627h10v14h-10zM106 745h10v18h-10z" />
        <path d="M1796 458L1806 455L1828 614H1816ZM1816 627h10v14h-10zM1816 745h10v18h-10zM1816 768H1828L1810 928L1796 920Z" />
      </g>
      <rect x="803" y="609" width="326" height="164" fill="#bca37f" />
      <rect x="834" y="621" width="264" height="141" fill="#d7c394" stroke="#e0d0a8" strokeWidth="4" />
      <rect x="834" y="673" width="52" height="38" fill="#b99a78" />
      <rect x="1046" y="673" width="52" height="38" fill="#b99a78" />
      <g fill="none" stroke="#e0d0a8" strokeWidth="3">
        <path d="M834 634H858C935 645 935 738 858 750H834M1098 634H1074C997 645 997 738 1074 750H1098M966 621V762" />
        <circle cx="966" cy="691" r="16" />
      </g>
      <g fill="#a0a0a0">
        <rect x="815" y="783" width="78" height="8" />
        <rect x="911" y="783" width="110" height="8" />
        <rect x="1036" y="783" width="108" height="8" />
      </g>
      <g className="map" fill={green} stroke="#555" strokeWidth="1.700">
        <rect x="792" y="812" width="109" height="226" />
        <rect x="1032" y="812" width="109" height="226" />
        <rect x="800" y="796" width="35" height="12" />
        <rect x="1097" y="796" width="38" height="12" />
      </g>
      <rect x="797" y="702" width="398" height="238" rx="4" fill={blue} fillOpacity=".4" />
      <rect x="797" y="702" width="398" height="238" rx="4" fill="none" stroke={blue} strokeWidth="22.500" />
    </Overview>
  );
}

function ArenaDetail() {
  return (
    <svg width="1056" height="656" viewBox="2104 898 1056 656">
      <rect x="2117" y="890" width="868" height="216" fill="#bca37f" />
      <rect x="2200.500" y="880" width="701" height="184" fill="#d7c394" stroke="#fffdf8" strokeWidth="5" />
      <g fill="#bca37f" stroke="#fffdf8" strokeWidth="3">
        <rect x="2203" y="880" width="138" height="56.500" />
        <rect x="2761.500" y="880" width="138" height="56.500" />
      </g>
      <g fill="none" stroke="#fffaf0" strokeWidth="3">
        <path d="M2413 898A168.700 168.700 0 0 1 2309 1041H2203" />
        <path d="M2689 898A168.700 168.700 0 0 0 2796 1041H2901" />
        <circle cx="2551.500" cy="877" r="46" />
        <path d="M2551.500 890V1064M2409.500 1044V1062M2692.500 1044V1062" />
        <path d="M2342 920.500A44.500 44.500 0 0 0 2380 898M2761 920.500A44.500 44.500 0 0 1 2723 898" />
        <path d="M2252 938v5M2258 938v5M2281.500 938v5M2304.500 938v5M2797.500 938v5M2821 938v5M2843.500 938v5M2850.500 938v5" strokeWidth="2" />
      </g>
      <path d="M2551.500 1066V1106" stroke="#c9b594" strokeWidth="1" />
      <path d="M2200 890V908M2902.500 890V908" stroke="#666" strokeWidth="4" />
      <g fill="#a8a8a8">
        <rect x="2090" y="1120.500" width="290" height="31" />
        <rect x="2401.500" y="1120.500" width="299" height="31" />
        <rect x="2725" y="1120.500" width="299" height="31" />
      </g>
      <path d="M2104 1145.500H2380M2401.500 1145.500H2700M2725 1145.500H3024" stroke="#b8b8b8" strokeWidth="1" />
      <g fontSize="20.500" fill="#333" stroke="#333" strokeWidth=".4" textAnchor="middle">
        <text x="2228.500" y="1143.500" textLength="60">HOME</text>
        <text x="2551" y="1143.500" textLength="88">SCORERS</text>
        <text x="2881" y="1143.500" textLength="87">VISITORS</text>
      </g>
      <g fill="#e5e5e5" stroke={green} strokeWidth="6" strokeLinejoin="round">
        <rect x="2110" y="1166" width="86" height="26" />
        <rect x="2910" y="1166" width="86" height="26" fill="#f1f1f1" />
        <rect x="2080" y="1206" width="300" height="400" />
        <rect x="2724" y="1206" width="300" height="400" fill="#f1f1f1" />
      </g>
      <g fill="#e5e5e5" stroke="#555" strokeWidth="2">
        <rect x="2408" y="1206" width="288" height="400" />
        <path d="M3080 880V1093H3180V880Z" />
        <path d="M3107 1121H3180V1184H3107Z" />
        <path d="M3052.500 1600V1206H3106.500V1234H3149.500V1260H3180V1600Z" />
      </g>
      <path d="M3078.500 880V1092M3106 1119.500H3160" stroke="#999" strokeWidth="1.500" />
    </svg>
  );
}

/* ---------- data ---------- */

type Listing = { section: string; row: string; qty: number; price: string; age: string; cost?: string; change?: string; roi?: string };

const listings: Listing[] = [
  { section: "114", row: "W", qty: 2, cost: "118.18", price: "70.00", change: "4%", roi: "-41%", age: "1d" },
  { section: "116", row: "R", qty: 4, price: "71.36", age: "1d" },
  { section: "114", row: "J", qty: 2, price: "78.95", age: "1w" },
  { section: "116", row: "Q", qty: 4, price: "86.00", age: "1w" },
  { section: "116", row: "P", qty: 4, price: "94.00", age: "1w" },
  { section: "114", row: "E", qty: 2, price: "108.00", age: "1w" },
  { section: "116", row: "A", qty: 2, price: "109.00", age: "2w" },
  { section: "114", row: "A", qty: 3, price: "142.00", age: "18h" },
  { section: "114", row: "V", qty: 2, price: "159.04", age: "7w" },
  { section: "114", row: "R", qty: 2, price: "166.09", age: "7w" },
  { section: "116", row: "A", qty: 2, price: "172.00", age: "21h" },
  { section: "114", row: "X", qty: 4, price: "176.71", age: "7w" },
  { section: "116", row: "B", qty: 2, price: "192.00", age: "2d" },
];

const histogram = [0, 134, 66, 134, 134, 0, 66, 66, 0, 0, 0, 100, 0, 0, 66, 66, 200, 0, 66, 0];
const ticks = ["$60", "$88", "$116", "$144", "$172", "$200"];

function Amount({ value, badge }: { value: string; badge?: boolean }) {
  const [whole, cents] = value.split(".");
  return (
    <Money $badge={badge}>
      ${whole}
      <Cents>{cents}</Cents>
    </Money>
  );
}

function ScoreBox() {
  return (
    <Score>
      <span>6</span>
      <ScoreRule />
      <span>8</span>
    </Score>
  );
}

/* ---------- views ---------- */

function Header() {
  return (
    <TopBar>
      <Brand />
      <Nav>
        <NavItem>Home</NavItem>
        <NavItem>Setup</NavItem>
        <NavItem>Reporting</NavItem>
        <NavItem $muted>Admin</NavItem>
      </Nav>
      <Tools>
        <Switch>
          <Knob />
          <Cart />
        </Switch>
        <Avatar>
          <Bat />
        </Avatar>
        <Person />
        <Spacer $w={12} />
        <Triangle $dir="down" $w={16} $h={8} $color="#fff" style={{ marginTop: 14 }} />
      </Tools>
    </TopBar>
  );
}

function EventSummary() {
  return (
    <EventCard>
      <DateTile>
        <DateText>
          <Day>1.22</Day>
          <Weekday>MON</Weekday>
        </DateText>
        <Weather>
          <Sun />
        </Weather>
      </DateTile>
      <EventBox>
        <EventInfo>
          <EventTitle>
            Jazz @ Hawks <Playbook />
          </EventTitle>
          <EventLine $dim>Philips Arena, 7:30 PM</EventLine>
          <EventLine>2 of 618 tickets listed</EventLine>
        </EventInfo>
        <ScoreBox />
        <EventDonut>
          <Donut R={46} r={30} share={0.75} mark={16} />
        </EventDonut>
        <Expander>
          <Triangle $dir="down" $w={24} $h={13} $color="#6e6e6e" />
        </Expander>
      </EventBox>
      <NextArrow>
        <Triangle $dir="right" $w={9} $h={16} $color="#333" />
      </NextArrow>
    </EventCard>
  );
}

function MarketPane() {
  return (
    <Pane>
      <PaneView>
        <PaneContent>
          <ZonePicker>
            <ZoneIcon>
              <Layers />
            </ZoneIcon>
            <ZoneName>All Zones with Inventory</ZoneName>
            <Triangle $dir="down" $w={16} $h={9} $color="#000" />
          </ZonePicker>
          <PaneSummary>
            <SummaryLines>
              <SummaryLine>2 of 35 tickets listed</SummaryLine>
              <SummaryLine>
                <Check />
                View sold listings
              </SummaryLine>
            </SummaryLines>
            <PaneScore>
              <ScoreBox />
            </PaneScore>
            <PaneDonut>
              <Donut R={31} r={20} share={0.75} mark={11} />
            </PaneDonut>
          </PaneSummary>

          <GroupTitle>
            <GroupLabel $width={308}>Market Movement</GroupLabel>
          </GroupTitle>
          <StatGrid $top={38}>
            <div>
              <StatHead>Avg Sold Price</StatHead>
              {["Past day", "Past wk"].map((name) => (
                <StatRow key={name} $height={60}>
                  <StatName>{name}</StatName>
                  <Dash $color="#7068bd">-</Dash>
                  <Dash $color={blue}>-</Dash>
                </StatRow>
              ))}
            </div>
            <div>
              <StatHead>ROI</StatHead>
            </div>
          </StatGrid>
          <StatGrid $top={38}>
            <div>
              <StatHead $gap={4}>Sold</StatHead>
              {["Past day", "Past wk"].map((name) => (
                <StatRow key={name} $height={100}>
                  <StatName $lift>{name}</StatName>
                  <RingCell>
                    <Donut R={44} r={28.5} />
                  </RingCell>
                </StatRow>
              ))}
            </div>
            <div>
              <StatHead $gap={4}>Shared</StatHead>
              <RingCell $indent>
                <Donut R={44} r={28.5} />
              </RingCell>
              <RingCell $indent>
                <Donut R={44} r={28.5} />
              </RingCell>
            </div>
          </StatGrid>
          <GroupTitle $top={18}>
            <GroupLabel $width={292}>Price Distribution</GroupLabel>
          </GroupTitle>
          <Histogram>
            {histogram.map((h, i) => (
              <Slot key={i}>
                <Bar style={{ height: h }} />
                {i === 1 && <Bar $own style={{ height: 66 }} />}
              </Slot>
            ))}
          </Histogram>
          <Axis>
            {ticks.map((t, i) => (
              <Tick key={t} $last={i === ticks.length - 1}>
                {t}
              </Tick>
            ))}
          </Axis>
          <Range>
            <RangeBox>
              <span>$67</span>
              <span>min</span>
            </RangeBox>
            <RangeName>Price</RangeName>
            <RangeBox>
              <span>$192</span>
              <span>max</span>
            </RangeBox>
          </Range>
        </PaneContent>
      </PaneView>
      <PaneTrack>
        <PaneThumb />
      </PaneTrack>
    </Pane>
  );
}

function Listings() {
  return (
    <Table>
      <TableHead>
        <Flag $color="#c9c9c9" $bottom={2} />
        <Actions $drop={6}>
          <Check />
        </Actions>
        <HeadCell>Section</HeadCell>
        <HeadCell>Row</HeadCell>
        <QtyHead>
          Qty
          <svg width="22" height="22" viewBox="0 0 22 22">
            <path d="M0 0H22L13 10.500V20L9.500 22V10.500Z" fill="#b3b3b3" />
          </svg>
        </QtyHead>
        <CostHead>Cost</CostHead>
        <PriceHead>
          <svg width="13" height="30" viewBox="0 0 13 30">
            <path d="M6.500 0L13 8H8.500V30H4.500V8H0Z" fill="#555" />
          </svg>
          Price
        </PriceHead>
        <HeadCell>Change</HeadCell>
        <HeadCell>ROI</HeadCell>
        <AgeCell $head>Age</AgeCell>
      </TableHead>
      <TableBody>
        <Rows>
          {listings.map((l, i) => (
            <Row key={i} $own={i === 0}>
              <Flag $color={i === 0 ? blue : "transparent"} $top={i === 0 ? 4 : 0} />
              <Actions $drop={i === 0 ? 3 : 0}>
                {i === 0 && (
                  <>
                    <RowCheck $lift />
                    <Share />
                  </>
                )}
              </Actions>
              <span>{l.section}</span>
              <span>{l.row}</span>
              <span>{l.qty}</span>
              <span>{l.cost && <Amount value={l.cost} />}</span>
              <PriceCell>
                <Amount value={l.price} badge={i === 0} />
              </PriceCell>
              <span>{l.change}</span>
              <span>{l.roi}</span>
              <AgeCell>{l.age}</AgeCell>
            </Row>
          ))}
        </Rows>
        <TableTrack />
      </TableBody>
      <Loading>
        <Spinner />
      </Loading>
    </Table>
  );
}

export default function App() {
  return (
    <Page>
      <GlobalStyle />
      <Header />
      <Columns>
        <Column $gap={30}>
          <EventSummary />
          <WorkCard>
            <MarketPane />
            <Listings />
          </WorkCard>
        </Column>
        <Column $gap={30}>
          <OverviewCard>
            <MapTools>
              <RefreshIcon viewBox="128 128 1536 1536">
                <path
                  fill="#b3b3b3"
                  d="M1639 1056q0 5-1 7-64 268-268 434.500t-478 166.500q-146 0-282.500-55t-243.500-157l-129 129q-19 19-45 19t-45-19-19-45v-448q0-26 19-45t45-19h448q26 0 45 19t19 45-19 45l-137 137q71 66 161 102t187 36q134 0 250-65t186-179q11-17 53-117 8-23 30-23h192q13 0 22.500 9.500t9.500 22.500zm25-800v448q0 26-19 45t-45 19h-448q-26 0-45-19t-19-45 19-45l138-138q-148-137-349-137-134 0-250 65t-186 179q-11 17-53 117-8 23-30 23h-199q-13 0-22.500-9.500t-9.500-22.500v-7q65-268 270-434.500t480-166.500q146 0 284 55.500t245 156.500l130-129q19-19 45-19t45 19 19 45z"
                />
              </RefreshIcon>
              <ModePicker>
                <ModeName>Section</ModeName>
                <Switch $on>
                  <Knob />
                </Switch>
                <ModeName>Zone</ModeName>
              </ModePicker>
            </MapTools>
            <ArenaOverview />
          </OverviewCard>
          <DetailCard>
            <ArenaDetail />
            <ZoomControl>
              <ZoomButton $size={46} $line={63}>+</ZoomButton>
              <ZoomButton $size={68} $line={47}>-</ZoomButton>
            </ZoomControl>
            <HelpCorner>
              <Help>?</Help>
            </HelpCorner>
          </DetailCard>
        </Column>
      </Columns>
    </Page>
  );
}
